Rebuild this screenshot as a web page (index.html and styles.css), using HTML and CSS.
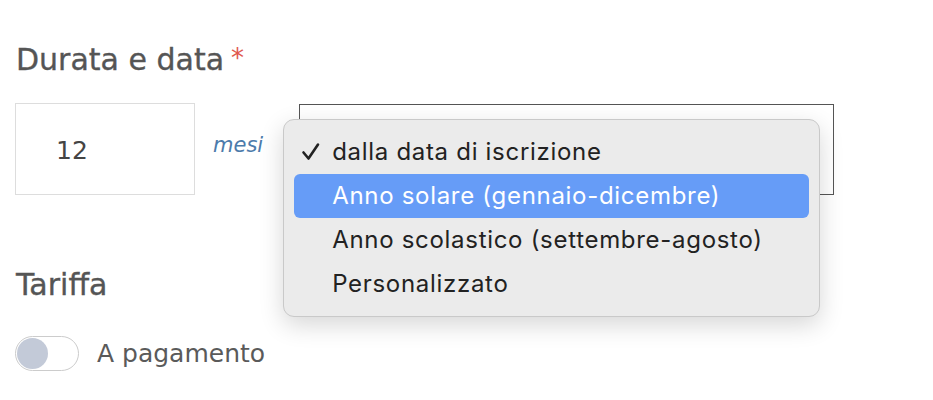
FILE: index.html
```html
<!DOCTYPE html>
<html lang="it">
<head>
<meta charset="utf-8">
<title>Durata e data</title>
<link rel="stylesheet" href="styles.css">
</head>
<body>
<div class="form">
  <section class="field">
    <h2 class="field-title">Durata e data<span class="req">*</span></h2>
    <div class="duration-row">
      <div class="num-input">12</div>
      <span class="unit">mesi</span>
      <div class="select-wrap">
        <div class="select-box"></div>
        <ul class="menu">
          <li class="menu-item checked"><svg class="check" width="20" height="20" viewBox="0 0 20 20"><path d="M2.5 10.5 L7.5 16.5 L17 2.5" fill="none" stroke="#222" stroke-width="2.6" stroke-linecap="round" stroke-linejoin="round"/></svg>dalla data di iscrizione</li>
          <li class="menu-item active">Anno solare (gennaio-dicembre)</li>
          <li class="menu-item">Anno scolastico (settembre-agosto)</li>
          <li class="menu-item">Personalizzato</li>
        </ul>
      </div>
    </div>
  </section>
  <section class="field tariff">
    <h2 class="field-title">Tariffa</h2>
    <div class="toggle-row">
      <span class="toggle"><span class="knob"></span></span>
      <span class="toggle-label">A pagamento</span>
    </div>
  </section>
</div>
</body>
</html>
```
FILE: styles.css
```css
* { box-sizing: border-box; }
body {
  margin: 0;
  background: #ffffff;
  font-family: "DejaVu Sans", Lato, sans-serif;
  color: #555555;
}
.form {
  padding: 40px 16px 0 15px;
}
.field-title {
  margin: 0 0 0 1px;
  font-size: 30px;
  font-weight: 400;
  line-height: 36px;
  color: #555555;
  -webkit-text-stroke: 0.35px #555555;
}
.req {
  color: #e0584e;
  -webkit-text-stroke: 0;
  margin-left: 7px;
  font-size: 26px;
  vertical-align: 3px;
}
.duration-row {
  margin-top: 25px;
  display: flex;
  align-items: center;
}
.num-input {
  width: 180px;
  height: 92px;
  border: 1px solid #dddddd;
  padding-left: 40px;
  padding-top: 2px;
  display: flex;
  align-items: center;
  font-size: 25px;
  color: #444444;
}
.unit {
  margin-left: 18px;
  font-style: italic;
  font-size: 21px;
  color: #4c7bab;
  margin-top: -8px;
}
.select-wrap {
  position: relative;
  margin-left: 36px;
}
.select-box {
  width: 535px;
  height: 91px;
  border: 1px solid #555555;
  background: #ffffff;
}
.menu {
  position: absolute;
  left: -16px;
  top: 15px;
  width: 537px;
  margin: 0;
  padding: 10px 10px 10px;
  list-style: none;
  background: #ebebeb;
  border: 1px solid #c9c9c9;
  border-radius: 11px;
  box-shadow: 0 8px 24px rgba(0,0,0,0.16);
  font-family: Inter, "Noto Sans", sans-serif;
  font-size: 24px;
  letter-spacing: 0.7px;
  color: #222222;
}
.menu-item {
  height: 44px;
  display: flex;
  align-items: center;
  padding-left: 38px;
  border-radius: 6px;
  position: relative;
}
.menu-item.active {
  background: #669cf7;
  color: #ffffff;
}
.check {
  position: absolute;
  left: 7px;
  top: 12px;
}
.tariff {
  margin-top: 72px;
}
.toggle-row {
  margin-top: 33px;
  display: flex;
  align-items: center;
}
.toggle {
  width: 64px;
  height: 35px;
  border: 1px solid #cccccc;
  border-radius: 18px;
  display: flex;
  align-items: center;
  padding-left: 1px;
}
.knob {
  width: 31px;
  height: 31px;
  border-radius: 50%;
  background: #c3cad8;
}
.toggle-label {
  margin-left: 18px;
  font-size: 25px;
  color: #5a5a5a;
}
```
